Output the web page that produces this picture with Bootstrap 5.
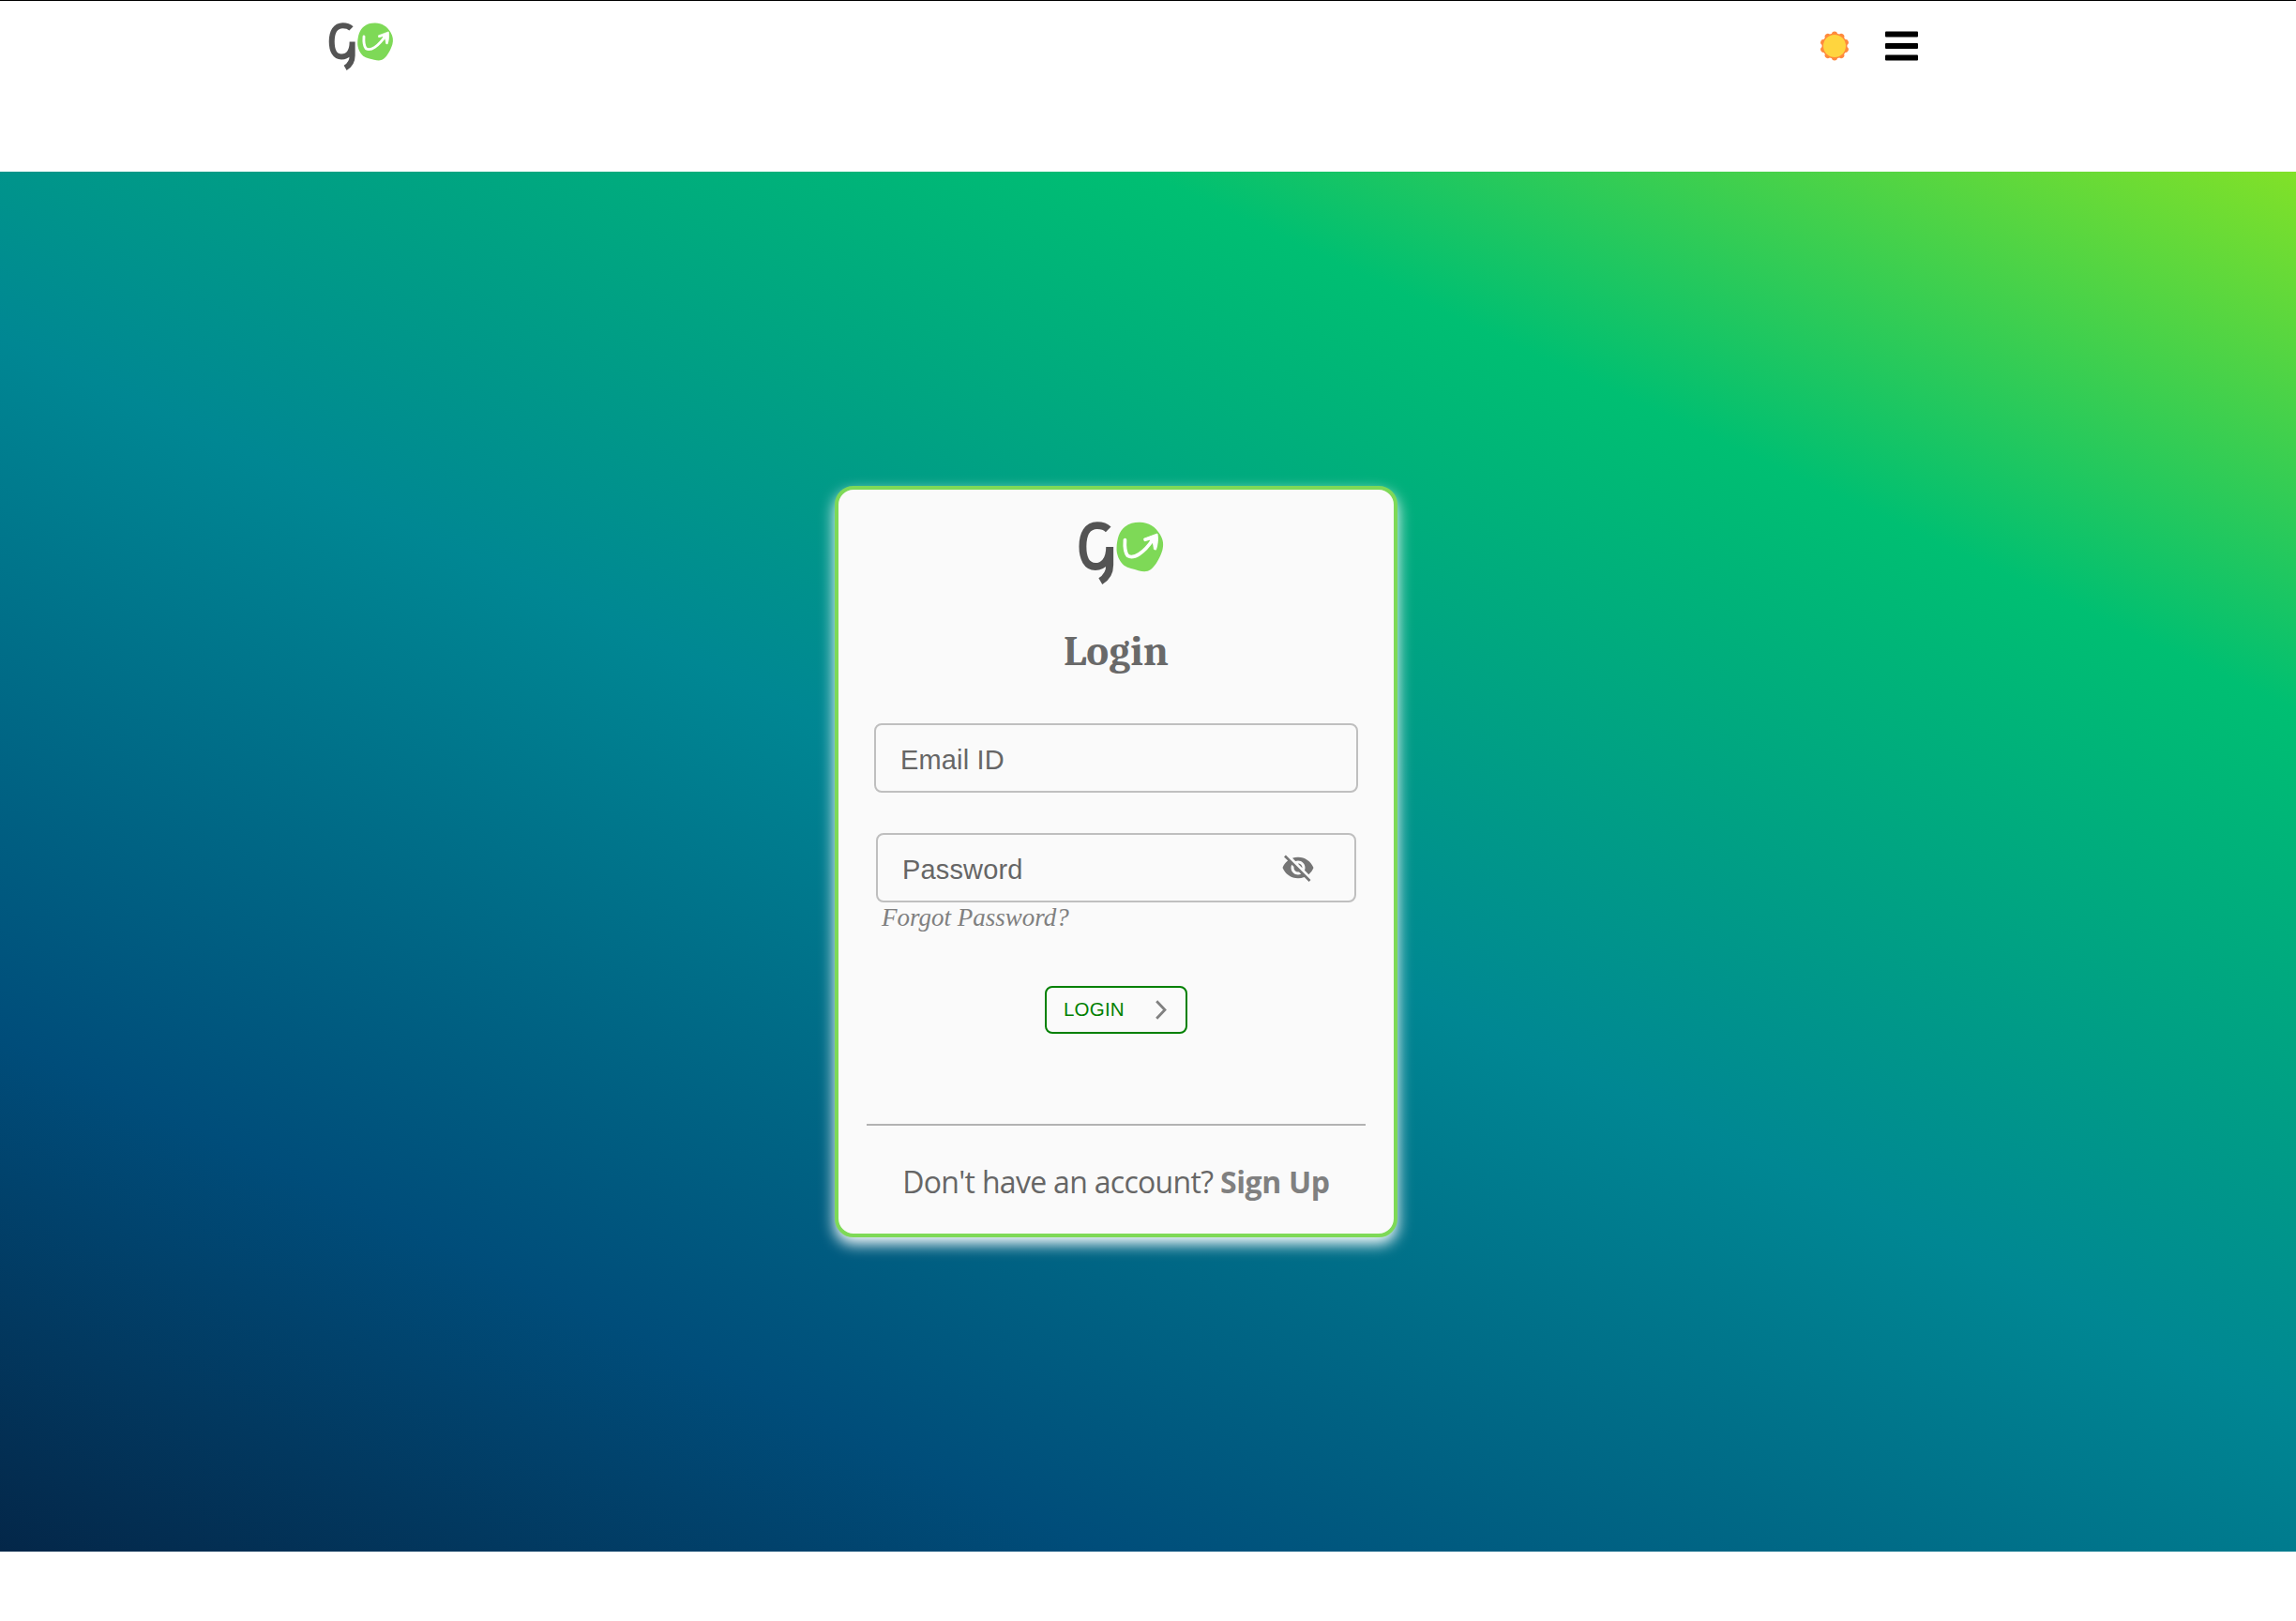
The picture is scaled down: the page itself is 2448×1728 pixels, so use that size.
<!DOCTYPE html>
<html lang="en">
<head>
<meta charset="utf-8">
<meta name="viewport" content="width=device-width, initial-scale=1">
<title>Login</title>
<link href="https://cdn.jsdelivr.net/npm/bootstrap@5.3.0/dist/css/bootstrap.min.css" rel="stylesheet">
<style>
  body { background: #fff; color: #666; font-family: "Open Sans", "Noto Sans", sans-serif; overflow: hidden; }
  .site-head { height: 183px; border-top: 1px solid #000; padding: 23px 403px 0 350px; }
  .brand-sm { width: 70px; height: 51px; display: block; }
  .head-tools { gap: 38px; padding-top: 9px; }
  .hero { height: 1471px; padding-left: 890px; padding-top: 335px;
    background: linear-gradient(25deg, #051937, #004d7a, #008793, #00bf72, #a8eb12) 0 -171px / 100% 1838px no-repeat; }
  .login-box { width: 600px; height: 801px; background: #fafafa; border: 4px solid #7ed957; border-radius: 20px;
    box-shadow: 0 7px 16px #fff; padding-top: 34px; }
  .brand-lg { width: 93px; height: 67px; margin-left: 11px; }
  .login-title { font: bold 45px/50px "Caladea", "Liberation Serif", serif; color: #696969; margin: 46px 0 0; }
  .field { width: 516px; height: 74px; border: 2px solid #bfbfbf; border-radius: 8px; padding: 0 26px;
    font: 29px/1 "Liberation Sans", Arial, sans-serif; color: #666; margin-top: 52px; }
  .field input { border: 0; outline: 0; background: transparent; padding: 4px 0 0; width: 300px; letter-spacing: .15px; }
  .field input::placeholder { color: #666; opacity: 1; }
  .field.pw { width: 512px; margin-top: 43px; padding-right: 42px; }
  .forgot { font: italic 27px/30px "Liberation Serif", serif; color: #808080; width: 512px; padding: 1px 0 0 6px; text-decoration: none; }
  .go-btn { width: 152px; height: 51px; border: 2px solid #008000; border-radius: 8px; color: #008000; background: transparent;
    font: 20.5px/1 "Liberation Sans", Arial, sans-serif; letter-spacing: .2px; padding: 0 20px 0 18px; margin-top: 58px; }
  .rule { width: 532px; height: 2px; background: #b2b2b2; margin-top: 96px; }
  .signup { font-size: 32px; line-height: 44px; margin-top: 38px; white-space: nowrap; letter-spacing: -.7px; }
  .signup a { color: #808080; font-weight: 700; text-decoration: none; letter-spacing: -.35px; }
</style>
<script src="https://cdn.jsdelivr.net/npm/bootstrap@5.3.0/dist/js/bootstrap.bundle.min.js"></script>
</head>
<body>
<svg class="d-none" xmlns="http://www.w3.org/2000/svg">
  <symbol id="go-logo" viewBox="0 0 93 68">
    <path d="M32.5 8.5C29.500 5.500 25 4.200 20.500 4.200C10 4.200 4.800 13.500 4.800 27C4.800 40 9.500 48.700 18.500 48.700C27 48.700 34 42 34 27.300V47C34 55.500 31 60.500 24 64.500" fill="none" stroke="#545454" stroke-width="8"/>
    <path d="M66 .7C76 .5 83.500 5.500 88.500 14C92 20 92.500 25 91 31C88.500 39 84 47.500 78.500 51.800C74.500 54.800 70 54.200 65 53C60 51.500 54 50.500 49.500 47.500C44.500 43 41 36 41.500 28C42 19 44 10.500 50.500 5.500C55 2 60 .8 66 .7Z" fill="#7ed957"/>
    <path d="M50.500 20C50 27 50.500 33.500 53.500 37C60 41 71 34 81 19" fill="none" stroke="#fff" stroke-width="3.800" stroke-linecap="round"/>
    <path d="M71 18.500L85.500 13.200C86.500 18 86 25 84 30.500L82 30C81.500 27 81.500 25 80.500 23L77 19.500C75 20 73 21 71.500 21Z" fill="#fff" stroke="#fff" stroke-width="1" stroke-linejoin="round"/>
  </symbol>
</svg>

<header class="site-head d-flex justify-content-between align-items-start">
  <a href="#" aria-label="Go"><svg class="brand-sm"><use href="#go-logo"/></svg></a>
  <div class="head-tools d-flex align-items-center">
    <svg width="32" height="32" viewBox="-16 -16 32 32">
      <g fill="#ff8a3c"><circle r="13.500"/>
      <circle cy="-12.500" r="3"/><circle cy="-12.500" r="3" transform="rotate(36)"/><circle cy="-12.500" r="3" transform="rotate(72)"/><circle cy="-12.500" r="3" transform="rotate(108)"/><circle cy="-12.500" r="3" transform="rotate(144)"/><circle cy="-12.500" r="3" transform="rotate(180)"/><circle cy="-12.500" r="3" transform="rotate(216)"/><circle cy="-12.500" r="3" transform="rotate(252)"/><circle cy="-12.500" r="3" transform="rotate(288)"/><circle cy="-12.500" r="3" transform="rotate(324)"/></g>
      <circle r="12" fill="#ffd53e"/>
    </svg>
    <svg width="35" height="32" viewBox="0 0 35 32"><rect y=".5" width="35" height="6" rx="1"/><rect y="13" width="35" height="6" rx="1"/><rect y="25.500" width="35" height="6" rx="1"/></svg>
  </div>
</header>

<main class="hero">
  <form class="login-box d-flex flex-column align-items-center">
    <svg class="brand-lg flex-shrink-0"><use href="#go-logo"/></svg>
    <h1 class="login-title">Login</h1>
    <label class="field d-flex align-items-center"><input type="text" placeholder="Email ID"></label>
    <label class="field pw d-flex align-items-center justify-content-between">
      <input type="password" placeholder="Password">
      <svg width="36" height="36" viewBox="0 0 24 24" fill="#757575"><path d="M12 7c2.760 0 5 2.240 5 5 0 .65-.13 1.260-.36 1.830l2.920 2.920c1.510-1.260 2.700-2.890 3.430-4.750-1.730-4.390-6-7.500-11-7.500-1.400 0-2.740.25-3.980.7l2.160 2.160C10.740 7.130 11.350 7 12 7zM2 4.270l2.280 2.280.46.46C3.080 8.300 1.780 10.020 1 12c1.730 4.390 6 7.500 11 7.500 1.550 0 3.030-.3 4.380-.84l.42.42L19.730 22 21 20.730 3.270 3 2 4.270zM7.530 9.800l1.550 1.550c-.05.21-.08.43-.08.65 0 1.660 1.340 3 3 3 .22 0 .44-.03.65-.08l1.550 1.550c-.67.33-1.410.53-2.200.53-2.760 0-5-2.240-5-5 0-.79.2-1.530.53-2.200zm4.310-.78l3.150 3.150.02-.16c0-1.660-1.340-3-3-3l-.17.01z"/></svg>
    </label>
    <a class="forgot" href="#">Forgot Password?</a>
    <button type="button" class="go-btn d-flex align-items-center justify-content-between"><span>LOGIN</span>
      <svg width="12" height="21" viewBox="0 0 12 21"><path d="M1.200 1.200L10 10.500L1.200 19.800" fill="none" stroke="#808080" stroke-width="2.800"/></svg>
    </button>
    <div class="rule"></div>
    <div class="signup">Don't have an account? <a href="#">Sign Up</a></div>
  </form>
</main>
</body>
</html>
